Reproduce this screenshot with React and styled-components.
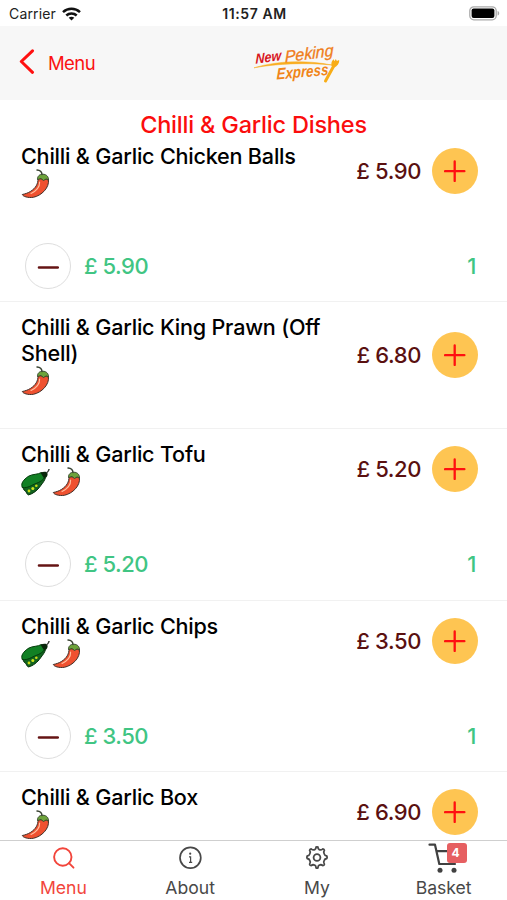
import styled, { createGlobalStyle } from "styled-components"

const GlobalStyle = createGlobalStyle`
  * {
    box-sizing: border-box;
  }
  body {
    margin: 0;
    background: #fff;
    font-family: Inter, "Liberation Sans", sans-serif;
  }
`

const Screen = styled.div`
  display: flex;
  flex-direction: column;
  height: 900px;
  overflow: hidden;
  background: #fff;
`

const StatusBar = styled.div`
  display: grid;
  grid-template-columns: 1fr auto 1fr;
  align-items: center;
  flex: none;
  height: 26px;
  padding: 1px 7px 0 9px;
  font-size: 14px;
  color: #222;
`

const Carrier = styled.div`
  display: flex;
  align-items: center;
  gap: 6px;
  letter-spacing: 0.15px;
`

const Clock = styled.div`
  font-weight: 600;
  font-size: 14px;
  letter-spacing: 0.6px;
`

const Battery = styled.div`
  display: flex;
  justify-content: flex-end;
`

const Header = styled.header`
  display: flex;
  align-items: center;
  flex: none;
  height: 74px;
  padding-left: 19px;
  background: #f7f7f7;
`

const BackButton = styled.button`
  display: flex;
  align-items: center;
  gap: 13px;
  width: 231px;
  padding: 0;
  border: 0;
  background: none;
  font-family: inherit;
  font-size: 18.5px;
  letter-spacing: -0.6px;
  color: #fb1212;
`

const List = styled.main`
  flex: 1;
  min-height: 0;
  overflow: hidden;
`

const SectionTitle = styled.h1`
  margin: 0;
  padding-top: 12px;
  font-size: 23.5px;
  line-height: 25px;
  font-weight: 450;
  letter-spacing: -0.2px;
  text-align: center;
  color: #fb0d0d;
`

const Row = styled.section`
  padding: ${props => props.$first ? "6px" : "12px"} 29px 0 21px;
  border-bottom: 1px solid #f1f1f1;
`

const RowTop = styled.div`
  display: flex;
  align-items: center;
  padding-bottom: 32px;
`

const Info = styled.div`
  width: 315px;
`

const Name = styled.h2`
  margin: 0;
  font-size: 21.6px;
  line-height: 26px;
  font-weight: 460;
  letter-spacing: -0.22px;
  color: #000;
`

const Tags = styled.div`
  display: flex;
  height: 30px;
`

const Price = styled.div`
  flex: 1;
  margin-right: 11px;
  font-size: 22px;
  font-weight: 450;
  letter-spacing: -0.4px;
  text-align: right;
  white-space: nowrap;
  color: #5a1010;
`

const RoundButton = styled.button`
  display: flex;
  align-items: center;
  justify-content: center;
  flex: none;
  width: 46px;
  height: 46px;
  padding: 0;
  border: ${props => props.$add ? "0" : "1px solid #dedede"};
  border-radius: 50%;
  background: ${props => props.$add ? "#fec552" : "#fff"};
`

const Ordered = styled.div`
  display: flex;
  align-items: center;
  padding: 12px 2px 12.4px 4px;
  font-size: 22px;
  font-weight: 450;
  letter-spacing: -0.5px;
  color: #40c583;
`

const Subtotal = styled.div`
  flex: 1;
  margin-left: 13px;
`

const TabBar = styled.nav`
  display: grid;
  grid-template-columns: repeat(4, 1fr);
  flex: none;
  height: 60px;
  border-top: 1px solid #cfcfcf;
  background: #fff;
`

const Tab = styled.div`
  display: flex;
  flex-direction: column;
  align-items: center;
  font-size: 17.6px;
  line-height: 25px;
  color: ${props => props.$active ? "#f2453b" : "#484848"};
`

const TabIcon = styled.div`
  position: relative;
  display: flex;
  align-items: center;
  justify-content: center;
  width: 32px;
  height: 34px;
`

const Badge = styled.span`
  position: absolute;
  top: 2px;
  right: -7px;
  width: 20px;
  height: 20px;
  border-radius: 3px;
  background: #e65f61;
  font-size: 12px;
  line-height: 20px;
  font-weight: 700;
  text-indent: -2px;
  text-align: center;
  color: #fff;
`

const WifiIcon = () => (
  <svg width="19" height="14" viewBox="0 0 19 14" fill="none" stroke="#111" strokeWidth="2.5">
    <path d="M1 5.1C5.7.7 13.3.7 18 5.1" />
    <path d="M4.3 8.5c2.9-2.7 7.5-2.7 10.4 0" />
    <path d="M9.5 13.6 6.7 10.8c1.6-1.4 4-1.4 5.6 0z" fill="#111" stroke="none" />
  </svg>
)

const BatteryIcon = () => (
  <svg width="31" height="15" viewBox="0 0 31 15">
    <rect x=".8" y=".8" width="26.4" height="13" rx="4" fill="#fff" stroke="#aaa" strokeWidth="1.3" />
    <rect x="2.6" y="2.6" width="22.8" height="9.4" rx="2" fill="#000" />
    <path d="M28.6 5v4.6c2.2-.7 2.2-3.9 0-4.6z" fill="#aaa" />
  </svg>
)

const Logo = () => (
  <svg width="98" height="50" viewBox="0 0 98 50" fontFamily="'Liberation Sans', sans-serif" fontStyle="italic">
    <path d="M4 29.8C28 22.5 56 22 82 27 56 24.5 28 25.5 4 29.8z" fill="#f9ad20" stroke="#f9ad20" strokeWidth=".5" />
    <text transform="translate(5.5 25.8) rotate(-8) skewX(-8)" fontSize="14" fontWeight="700" textLength="26" lengthAdjust="spacingAndGlyphs" fill="#d8171f">New</text>
    <text transform="translate(35 24.5) rotate(-8) skewX(-7)" fontSize="16.5" textLength="49" lengthAdjust="spacingAndGlyphs" fill="#ef7d1a" stroke="#ef7d1a" strokeWidth=".3">Peking</text>
    <text transform="translate(26.5 41.5) rotate(-5) skewX(-6)" fontSize="16" fontWeight="700" textLength="52" lengthAdjust="spacingAndGlyphs" fill="#f08519">Express</text>
    <path d="M84 27.5 75.5 43" stroke="#f8ad16" strokeWidth="3" strokeLinecap="round" />
    <path d="M81.5 28c-.5-3 .2-5.500 2.200-6.700l.8 2 1.300-2.400 1.100 2.200 2.200-1.200c.6 3.200-2.300 6.600-5 7.600z" fill="#f8ad16" />
  </svg>
)

const ChilliIcon = () => (
  <svg width="31" height="31" viewBox="0 0 31 31">
    <path d="M17 9.500c.2 5.500-2.500 9.700-7.300 12.800C7 24 4 25 1.300 25.500c.7 2 5.700 3.600 11 2.800 8-1.500 16.700-9.800 15-18.100z" fill="#ef5130" stroke="#41312a" strokeWidth="1" strokeLinejoin="round" />
    <path d="M18.600 13c.3 5-3.600 9-8.600 11.500" fill="none" stroke="#ffc0a0" strokeWidth="1.1" strokeLinecap="round" />
    <path d="M16.500 10.500c-.3-3.300 2.200-5.400 5.300-5.300 3.600 0 6 2.500 5.600 6l-2.200-1.300-2.700 1.600-2.500-1.900z" fill="#6da33b" stroke="#324329" strokeWidth=".9" strokeLinejoin="round" />
    <path d="M16 1c3 .2 4.800 1.600 5 4.500" fill="none" stroke="#384232" strokeWidth="1.4" strokeLinecap="round" />
  </svg>
)

const PeaIcon = () => (
  <svg width="31" height="31" viewBox="0 0 31 31">
    <path d="M1.500 18.500c.7 2.500.8 4.500 3 5.800 1 .6 1.200 3.200 3 3.600 4.500-1 9-4.600 12-9 2.300-3 4.300-5.400 5-8.400z" fill="#11641f" stroke="#052f0b" strokeLinejoin="round" />
    <circle cx="8" cy="24" r="1.400" fill="#c9dc16" />
    <circle cx="11.800" cy="21.600" r="1.500" fill="#d1e51b" />
    <circle cx="15.300" cy="18.800" r="1.300" fill="#c9dc16" />
    <path d="M.8 18.500C.3 15 4.500 11 8 9c3.800-2 8.500-1.300 12.500-3.500l3.800 4.200c-2 3.300-5.500 5.500-9.300 6.800-4 1.300-8 5-13.800 4z" fill="#118024" stroke="#043b0b" strokeLinejoin="round" />
    <path d="M19.500 5.700c2-.9 4-1.400 5.900-.7 1.700 1 1.500 3.400.1 5.200l-2.700.7z" fill="#09270b" />
    <path d="M25.500 6c1-.7 2.300-1.900 2.600-4" fill="none" stroke="#363c36" strokeWidth="1.5" />
  </svg>
)

const SearchIcon = () => (
  <svg width="24" height="24" viewBox="0 0 24 24" fill="none" stroke="currentColor" strokeWidth="1.9" strokeLinecap="round">
    <circle cx="11.8" cy="11" r="8.7" />
    <path d="m18 17.200 4.500 4.500" />
  </svg>
)

const InfoIcon = () => (
  <svg width="24" height="24" viewBox="0 0 24 24" fill="none" stroke="currentColor" strokeWidth="1.7">
    <circle cx="12.400" cy="11.700" r="10.400" />
    <circle cx="12.200" cy="7.700" r="1.100" fill="currentColor" stroke="none" />
    <path d="M11 10.900h1.600v5.500M11 16.300h3.200" strokeWidth="1.2" />
  </svg>
)

const GearIcon = () => (
  <svg width="26" height="26" viewBox="0 0 26 26" fill="none" stroke="currentColor" strokeWidth="1.8" strokeLinejoin="round">
    <circle cx="13" cy="12.500" r="3.400" />
    <path d="M10.700 4.700Q12 4 12.100 2.100q.9-.6 1.800 0Q14 4 15.300 4.700q1.800.7 3.600-.9 1.300.1 1.500 1.500-1.300 1.800-.2 3.600.5 2 2.600 2.100.7 1.300 0 2.500-2.100.2-2.600 2-1.200 1.800.2 3.700-.1 1.300-1.500 1.400-1.800-1.500-3.600-.4-1.300.5-1.400 2.700-.9.500-1.800 0-.1-2.200-1.400-2.700-1.800-1.100-3.600.4-1.400-.1-1.500-1.400 1.400-1.900.2-3.700-.5-1.800-2.600-2-.7-1.200 0-2.500 2.100-.1 2.600-2.100 1.100-1.800-.2-3.600.2-1.400 1.500-1.500 1.800 1.600 3.600.9z" />
  </svg>
)

const CartIcon = () => (
  <svg width="32" height="32" viewBox="0 0 32 32" fill="none" stroke="#414141" strokeWidth="2.2" strokeLinejoin="round" strokeLinecap="round">
    <path d="M1.500 2.700H7l4.300 19.300H27M8.600 9.200H27" />
    <circle cx="12" cy="28.300" r="2.500" fill="#414141" stroke="none" />
    <circle cx="26" cy="28.300" r="2.500" fill="#414141" stroke="none" />
  </svg>
)

const PlusIcon = () => (
  <svg width="22" height="22" viewBox="0 0 22 22" stroke="#ff1010" strokeWidth="2.3" strokeLinecap="round">
    <path d="M1 11.200h19.400M10.700 1.500v19.400" />
  </svg>
)

const MinusIcon = () => (
  <svg width="22" height="22" viewBox="0 0 22 22" stroke="#651414" strokeWidth="2.6" strokeLinecap="round">
    <path d="M2 12.500h18.800" />
  </svg>
)

const dishes = [
  { name: "Chilli & Garlic Chicken Balls", price: "5.90", quantity: 1 },
  { name: "Chilli & Garlic King Prawn (Off Shell)", price: "6.80" },
  { name: "Chilli & Garlic Tofu", price: "5.20", quantity: 1, vegetarian: true },
  { name: "Chilli & Garlic Chips", price: "3.50", quantity: 1, vegetarian: true },
  { name: "Chilli & Garlic Box", price: "6.90" },
]

function Dish({ name, price, quantity, vegetarian, first }) {
  return (
    <Row $first={first}>
      <RowTop>
        <Info>
          <Name>{name}</Name>
          <Tags>
            {vegetarian && <PeaIcon />}
            <ChilliIcon />
          </Tags>
        </Info>
        <Price>£ {price}</Price>
        <RoundButton $add aria-label="Add"><PlusIcon /></RoundButton>
      </RowTop>
      {quantity && (
        <Ordered>
          <RoundButton aria-label="Remove"><MinusIcon /></RoundButton>
          <Subtotal>£ {price}</Subtotal>
          <div>{quantity}</div>
        </Ordered>
      )}
    </Row>
  )
}

export default function App() {
  return (
    <Screen>
      <GlobalStyle />
      <StatusBar>
        <Carrier>Carrier <WifiIcon /></Carrier>
        <Clock>11:57 AM</Clock>
        <Battery><BatteryIcon /></Battery>
      </StatusBar>
      <Header>
        <BackButton>
          <svg width="16" height="28" viewBox="0 0 16 28" fill="none" stroke="#ff1010" strokeWidth="3" strokeLinecap="round" strokeLinejoin="round">
            <path d="M13.5 1.800 2.300 12.500l11.200 10.800" />
          </svg>
          Menu
        </BackButton>
        <Logo />
      </Header>
      <List>
        <SectionTitle>Chilli &amp; Garlic Dishes</SectionTitle>
        {dishes.map((dish, index) => (
          <Dish key={dish.name} {...dish} first={index === 0} />
        ))}
      </List>
      <TabBar>
        <Tab $active><TabIcon><SearchIcon /></TabIcon>Menu</Tab>
        <Tab><TabIcon><InfoIcon /></TabIcon>About</Tab>
        <Tab><TabIcon><GearIcon /></TabIcon>My</Tab>
        <Tab><TabIcon><CartIcon /><Badge>4</Badge></TabIcon>Basket</Tab>
      </TabBar>
    </Screen>
  )
}
